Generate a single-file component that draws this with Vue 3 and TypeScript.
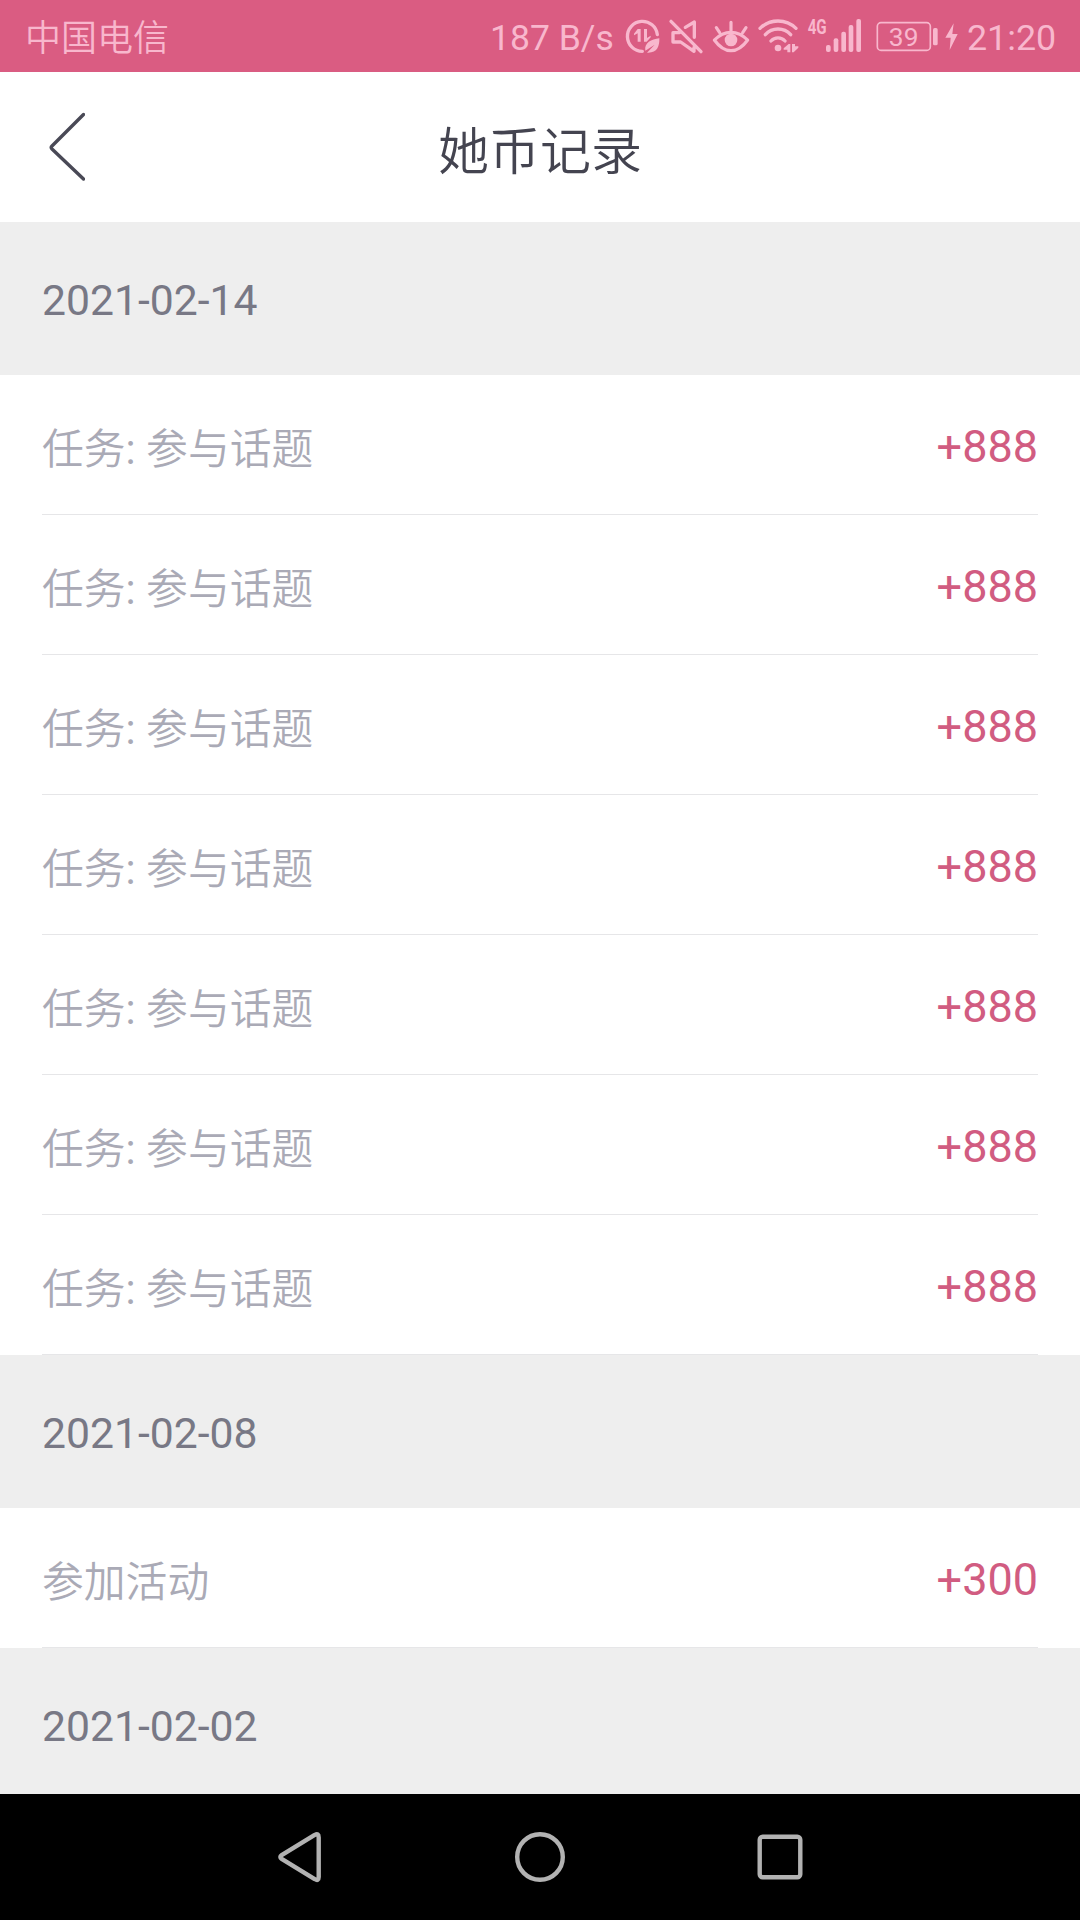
<script setup lang="ts">
interface CoinRecord {
  kind?: string
  label: string
  amount: number
}

interface RecordGroup {
  date: string
  records: CoinRecord[]
}

const groups: RecordGroup[] = [
  {
    date: '2021-02-14',
    records: Array.from({ length: 7 }, () => ({ kind: '任务', label: '参与话题', amount: 888 })),
  },
  { date: '2021-02-08', records: [{ label: '参加活动', amount: 300 }] },
  { date: '2021-02-02', records: [] },
]
</script>

<template>
  <div class="screen">
    <div class="status">
      <span class="carrier">中国电信</span>
      <span class="speed">187 B/s</span>
      <svg width="44" height="72" viewBox="420 0 132 216">
        <path class="line" stroke-width="10" d="M487 154A45 45 0 1 1 532 104" />
        <path class="fill" d="M473 87h9v38h-9v-25l-11 6v-5zM492 87h9v27l11-7v5l-12 13h-8z" />
        <path class="fill" d="M496 152C492 128 514 118 538 115C539 140 531 160 501 158L524 134Z" />
      </svg>
      <svg width="44" height="72" viewBox="552 0 132 216">
        <path class="line" stroke-width="10" d="M573 64L663 155M598 98H579V126H602L642 154V142M616 82L643 66V112" />
      </svg>
      <svg width="46" height="72" viewBox="684 0 138 216">
        <path class="line" stroke-width="9.5" d="M703 120Q726 97 753 97T803 120Q780 152 753 152T703 120ZM753 67V94M709 83L719 98M798 83L788 98" />
        <circle class="fill" cx="753" cy="120" r="19" />
      </svg>
      <svg width="50" height="72" viewBox="822 0 150 216">
        <path class="line" stroke-width="10" d="M840 85A77 77 0 0 1 948 85M856 104A51 51 0 0 1 932 104M873 123A28 28 0 0 1 915 123" />
        <circle class="fill" cx="894" cy="144" r="10" />
        <path class="fill" d="M931 132V157H922V149H911V145L926 132ZM936 157V132H945V139H955V143L941 157Z" />
      </svg>
      <svg width="66" height="72" viewBox="72 0 198 216">
        <text class="network" x="83" y="102" textLength="57" lengthAdjust="spacingAndGlyphs">4G</text>
        <rect class="fill" x="138" y="135" width="14" height="21" rx="6" />
        <rect class="fill" x="161" y="115" width="14" height="41" rx="6" />
        <rect class="fill" x="184" y="95" width="14" height="61" rx="6" />
        <rect class="fill" x="206" y="75" width="14" height="81" rx="6" />
        <rect class="fill" x="229" y="57" width="14" height="99" rx="6" />
      </svg>
      <svg width="72" height="72" viewBox="270 0 216 216">
        <rect class="line" stroke-width="5" x="292" y="68" width="159" height="83" rx="11" />
        <rect class="fill" x="459" y="84" width="14" height="52" rx="5" />
        <text class="level" x="371" y="138" text-anchor="middle">39</text>
      </svg>
      <svg width="18" height="72" viewBox="486 0 54 216">
        <path class="fill" d="M521 70L496 113H512L509 150L533 102H517Z" />
      </svg>
      <span class="clock">21:20</span>
    </div>

    <header class="header">
      <svg class="back" width="36" height="70" viewBox="0 0 36 70">
        <path d="M34.5 2.5L3 34Q1.5 35.5 3 37L34.5 67" />
      </svg>
      <h1>她币记录</h1>
    </header>

    <main class="list">
      <section v-for="group in groups" :key="group.date">
        <h2 class="date">{{ group.date }}</h2>
        <div v-for="(record, i) in group.records" :key="i" class="record">
          <span class="label"><template v-if="record.kind">{{ record.kind }}<span class="colon">: </span></template>{{ record.label }}</span>
          <span class="amount">+{{ record.amount }}</span>
        </div>
      </section>
    </main>

    <nav class="nav">
      <svg width="720" height="126" viewBox="0 0 720 126">
        <path d="M138.7 43.4Q138.7 38.4 134.7 41L101.7 61Q99 63 101.7 65L134.7 85Q138.7 87.6 138.7 83Z" />
        <circle cx="360" cy="63" r="22.8" />
        <rect x="579.7" y="42.7" width="40.6" height="40.6" rx="3" />
      </svg>
    </nav>
  </div>
</template>

<style>
body {
  margin: 0;
}
</style>

<style scoped>
.screen {
  display: flex;
  flex-direction: column;
  width: 1080px;
  height: 1920px;
  overflow: hidden;
  background: #fff;
  font-family: Roboto, 'Noto Sans CJK SC', sans-serif;
}
.status {
  display: flex;
  flex: none;
  align-items: center;
  height: 72px;
  background: #da5c82;
  color: #f8b7cd;
  font-size: 36px;
  line-height: 72px;
  white-space: nowrap;
}
.status svg {
  flex: none;
}
.carrier {
  margin: 6px 0 0 25px;
  font-weight: 350;
}
.speed {
  width: 130px;
  margin: 3px 0 0 auto;
  font-size: 35.5px;
}
.clock {
  width: 113px;
  margin-top: 3px;
  padding-left: 7px;
  font-size: 35.8px;
}
.line {
  fill: none;
  stroke: #f8b7cd;
  stroke-linecap: round;
  stroke-linejoin: round;
}
.fill {
  fill: #f8b7cd;
}
.network {
  fill: #f8b7cd;
  font-size: 60px;
  font-weight: 700;
}
.level {
  fill: #f8b7cd;
  font-size: 79px;
}
.header {
  display: grid;
  flex: none;
  grid-template-columns: 120px 1fr 120px;
  align-items: center;
  height: 150px;
}
.back {
  margin: -1px 0 0 48.6px;
}
.back path {
  fill: none;
  stroke: #494956;
  stroke-width: 3.4;
  stroke-linecap: round;
}
h1 {
  margin: 11px 0 0;
  color: #444450;
  font-size: 51px;
  font-weight: 350;
  line-height: 76px;
  text-align: center;
}
.list {
  flex: 1;
  min-height: 0;
  overflow: hidden;
}
section:last-child {
  height: 153px;
  background: #eee;
}
.date {
  height: 153px;
  margin: 0;
  padding-left: 42px;
  background: #eee;
  color: #787885;
  font-size: 42.7px;
  font-weight: 400;
  line-height: 157px;
}
.record {
  display: flex;
  box-sizing: border-box;
  align-items: center;
  justify-content: space-between;
  height: 140px;
  margin: 0 42px;
  border-bottom: 1px solid #e6e6e8;
}
.label {
  margin-top: 2px;
  color: #aaaab6;
  font-size: 41.8px;
  font-weight: 350;
}
.colon {
  font-weight: 400;
}
.amount {
  margin-top: 4px;
  color: #d15c81;
  font-size: 45px;
}
.nav {
  display: flex;
  flex: none;
  justify-content: center;
  height: 126px;
  background: #000;
}
.nav path,
.nav circle,
.nav rect {
  fill: none;
  stroke: #b2b2b2;
  stroke-width: 4.4;
}
</style>
